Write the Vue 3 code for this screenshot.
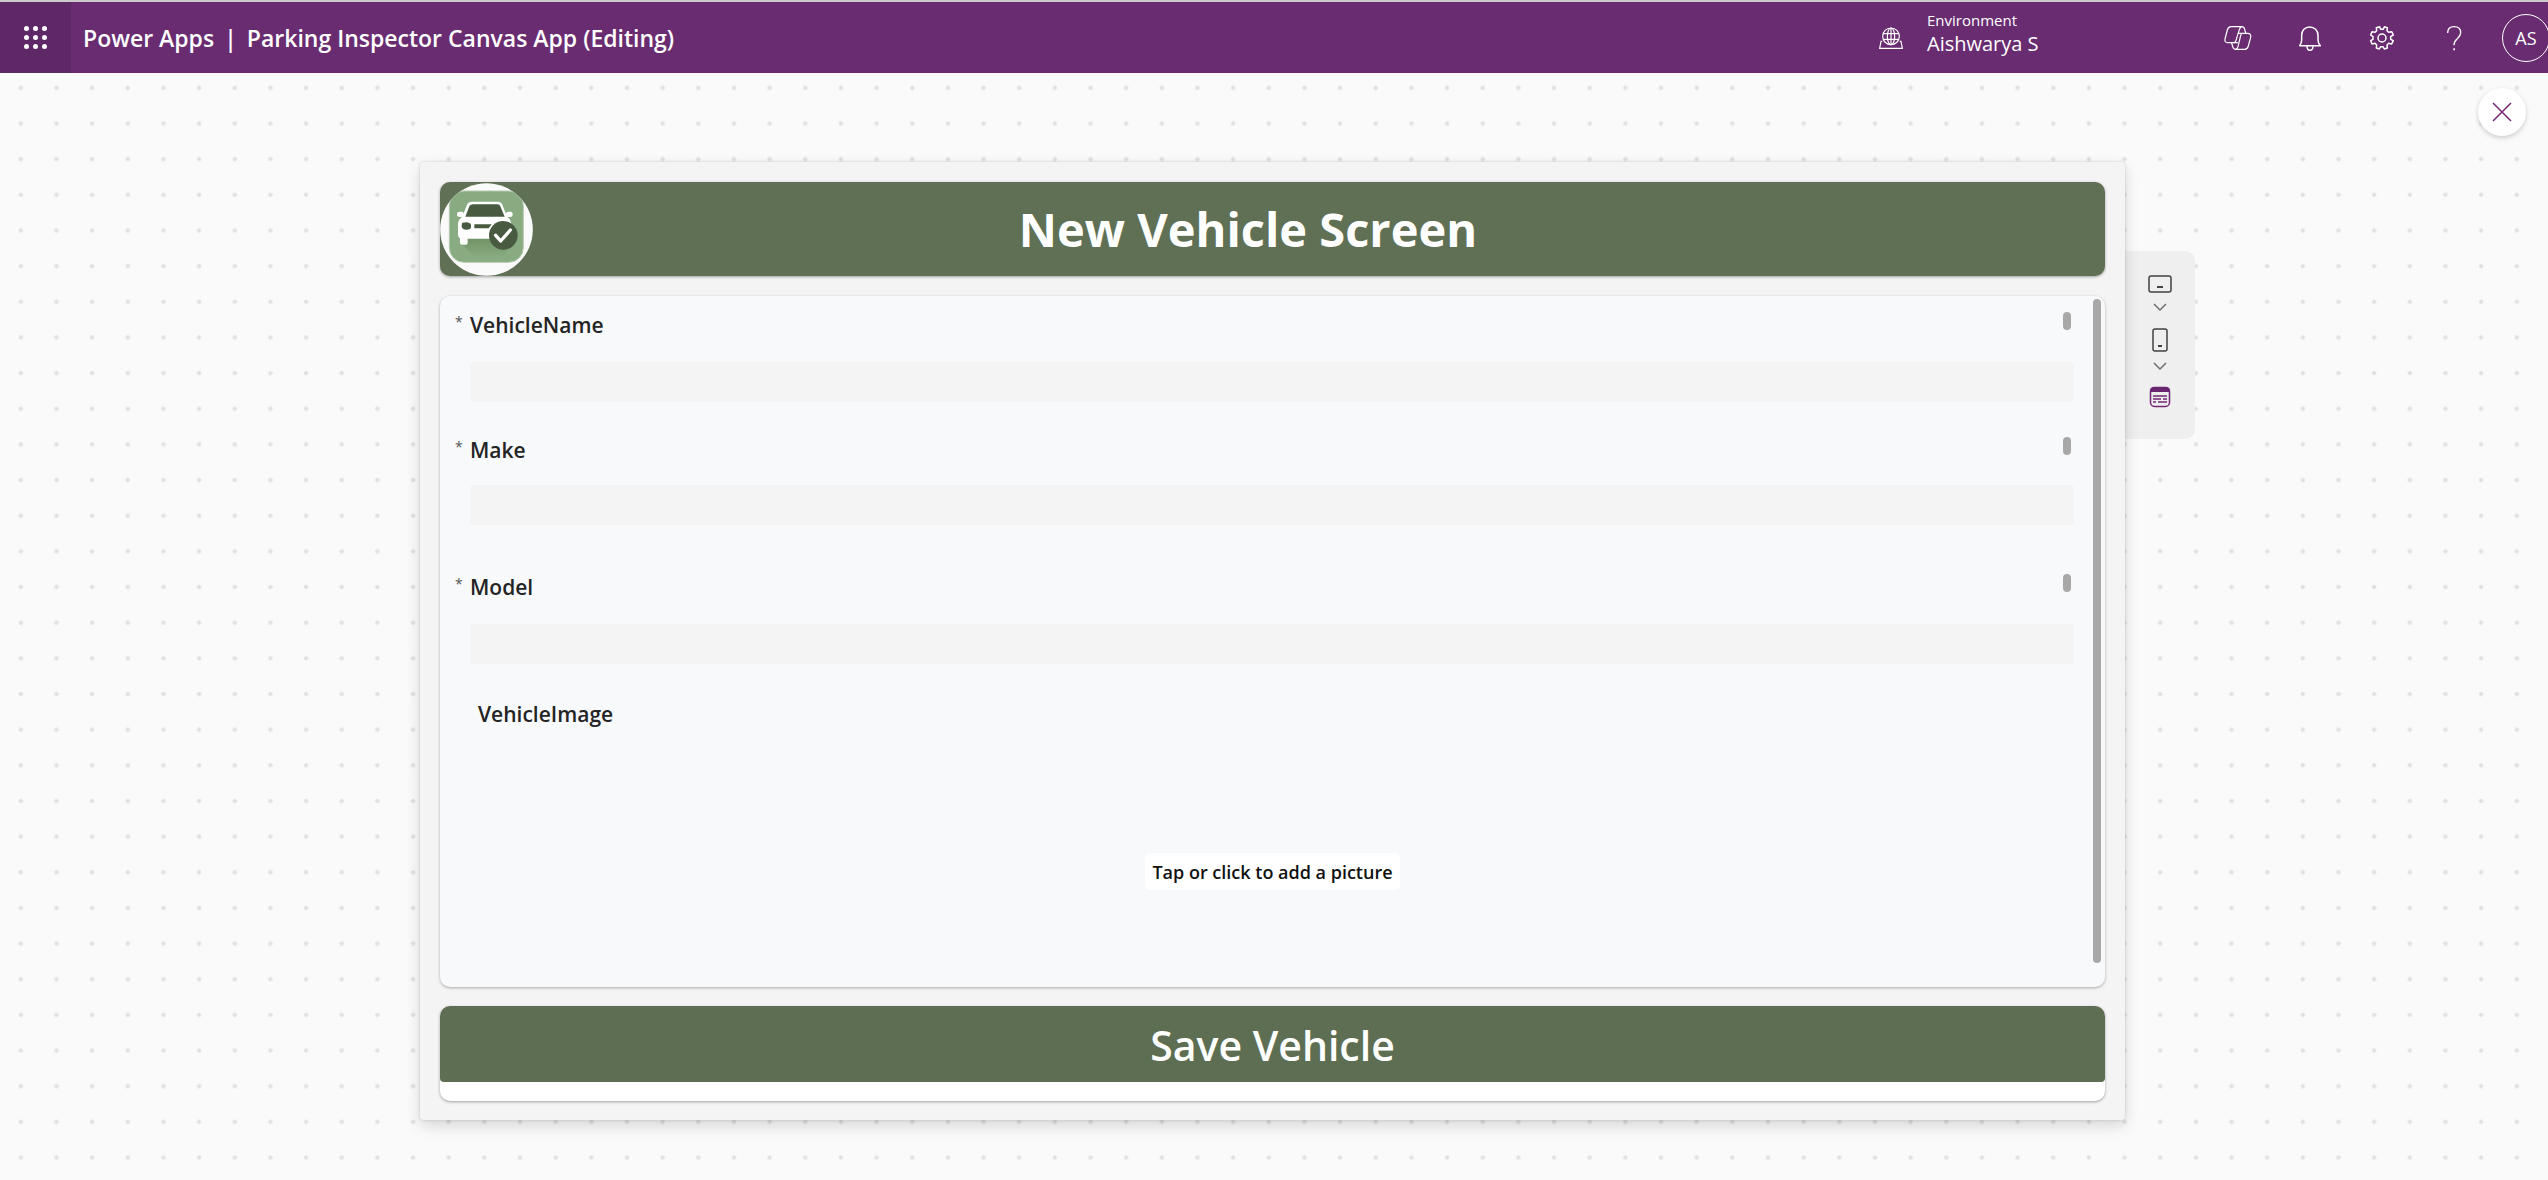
<script setup>
import { ref } from 'vue'

const fields = ref([
  { id: 'vehicle-name', label: 'VehicleName', value: '', size: 'short' },
  { id: 'make', label: 'Make', value: '', size: 'tall' },
  { id: 'model', label: 'Model', value: '', size: 'medium' },
])
const waffle = [0, 1, 2, 3, 4, 5, 6, 7, 8]
</script>

<template>
  <div class="page">
    <header class="topbar">
      <button class="launcher" type="button" aria-label="App launcher">
        <span v-for="n in waffle" :key="n" class="launcher-dot"></span>
      </button>
      <div class="titles">
        <a href="#" class="title-link">Power Apps</a>
        <span>|</span>
        <span>Parking Inspector Canvas App (Editing)</span>
      </div>

      <div class="environment">
        <svg class="env-icon" viewBox="57 78 72 72" fill="none" stroke="currentColor" stroke-width="3.5">
          <circle cx="93" cy="109" r="25" />
          <ellipse cx="93" cy="109" rx="11" ry="25" />
          <path d="M93 84v50M70 101h46M70 118h46" />
          <path d="M67 124h-4l-4 21h68l-4-21h-4" />
        </svg>
        <div class="env-text">
          <span class="env-label">Environment</span>
          <span class="env-name">Aishwarya S</span>
        </div>
      </div>

      <nav class="tools">
        <button type="button" class="tool" aria-label="Copilot">
          <svg width="30" height="28" viewBox="69 69 90 84" fill="none" stroke="currentColor" stroke-width="3.6" stroke-linejoin="round" stroke-linecap="round">
            <path d="M93 77h32q-5 2-7 9l-10 32q-2 7-8 7H83q-10 0-8-11l7-27q3-10 11-10z" />
            <path d="M126 97h17q11 0 9 12l-7 26q-3 10-11 10h-27q5-1 7-8l8-33q2-7 4-7z" />
            <path d="M125 77q7 0 9 8l3 11M107 145q-7 0-9-8l-3-11M126 97h-11M100 125h12" />
          </svg>
        </button>
        <button type="button" class="tool" aria-label="Notifications">
          <svg width="28" height="28" viewBox="291 69 84 84" fill="none" stroke="currentColor" stroke-width="4.5" stroke-linejoin="round">
            <path d="M302 134q6-8 6-17v-14c0-15 10-25 24-25s25 10 25 25v14q0 9 7 17z" />
            <path d="M324 136q0 12 9 12t9-12" />
          </svg>
        </button>
        <button type="button" class="tool" aria-label="Settings">
          <svg width="28" height="28" viewBox="509 69 84 84" fill="none" stroke="currentColor" stroke-width="4.5" stroke-linejoin="round">
            <circle cx="551" cy="111" r="12" />
            <path d="M544 77l3 8h8l3-8 9 3-1 9 5 5 9-2 5 10-8 5v8l8 4-5 10-9-2-5 5 1 9-9 3-4-7h-7l-4 7-9-3 1-9-5-5-9 2-4-10 7-4v-8l-7-5 4-10 9 2 5-5-1-9z" />
          </svg>
        </button>
        <button type="button" class="tool" aria-label="Help">
          <svg width="28" height="28" viewBox="121 69 84 84" fill="none" stroke="currentColor" stroke-width="4">
            <path d="M144 96c0-12 7-19 19-19s20 7 20 18c0 9-5 13-11 19-6 5-9 9-9 19" />
            <path d="M161 145h5" stroke-width="6" />
          </svg>
        </button>
      </nav>
      <button type="button" class="avatar" aria-label="Account">AS</button>
    </header>

    <main class="workspace">
      <section class="canvas">
        <div class="banner">
          <svg class="logo" viewBox="121 97 279 279">
            <defs>
              <clipPath id="logo-round"><circle cx="260.500" cy="236.500" r="139" /></clipPath>
              <linearGradient id="logo-shade" x1="0" y1="0" x2="0" y2="1">
                <stop offset="0" stop-color="#6f9163" />
                <stop offset="1" stop-color="#88ab82" />
              </linearGradient>
            </defs>
            <circle cx="260.500" cy="236.500" r="139" fill="#fafafa" />
            <g clip-path="url(#logo-round)">
              <rect x="149" y="121" width="222" height="214" rx="44" fill="#88ab82" stroke="#b4cbb0" stroke-width="3" />
            </g>
            <path d="M184 278l44 44h80l30-44-60-20h-80z" fill="url(#logo-shade)" />
            <path d="M217 153h78q10 0 13 9l10 26q1-5 8-5h6q7 0 7 8t-7 8h-9q12 9 12 20v45H204v12q0 6-6 6h-11q-6 0-6-6v-13q-6-3-6-11v-31q0-14 12-22h-8q-7 0-7-8t7-8h6q6 0 7 5l10-26q4-9 15-9z" fill="#fff" />
            <path d="M220 161h73q7 0 9 6l13 31H197l12-31q3-6 11-6z" fill="#485b40" />
            <path d="M188 216q22-5 26 6v7q-1 8-13 8-15 0-15-11 0-8 2-10zM224 221h52l-9 12h-43z" fill="#485b40" />
            <circle cx="311" cy="254" r="43" fill="#485b40" />
            <path d="M288 254l15 17 29-33" fill="none" stroke="#fff" stroke-width="10" stroke-linecap="round" stroke-linejoin="round" />
          </svg>
          <h1 class="banner-title">New Vehicle Screen</h1>
        </div>

        <form class="form-card" @submit.prevent>
          <div v-for="f in fields" :key="f.id" class="field" :class="f.size">
            <div class="field-head">
              <span class="required">*</span>
              <label class="field-label" :for="f.id">{{ f.label }}</label>
              <span class="pill"></span>
            </div>
            <input :id="f.id" v-model="f.value" class="field-input" type="text" />
          </div>
          <div class="image-field">
            <span id="image-label" class="field-label">VehicleImage</span>
            <button type="button" class="add-picture" aria-describedby="image-label">Tap or click to add a picture</button>
          </div>
          <div class="scroll-thumb"></div>
        </form>

        <div class="save-card">
          <button type="button" class="save">Save Vehicle</button>
        </div>
      </section>

      <aside class="side">
        <div class="rail">
          <button type="button" class="rail-button" aria-label="Tablet">
            <svg width="26" height="20" viewBox="0 0 26 20" fill="none" stroke="#424242" stroke-width="1.500">
              <rect x="2" y="2" width="22" height="16" rx="2" />
              <path d="M10 13h6" stroke-width="2" />
            </svg>
          </button>
          <button type="button" class="rail-button chevron" aria-label="Tablet sizes">
            <svg width="14" height="8" viewBox="0 0 14 8" fill="none" stroke="#707070" stroke-width="1.500"><path d="M1 1l6 6 6-6" /></svg>
          </button>
          <button type="button" class="rail-button phone" aria-label="Phone">
            <svg width="18" height="26" viewBox="0 0 18 26" fill="none" stroke="#424242" stroke-width="1.500">
              <rect x="2" y="2" width="14" height="22" rx="2" />
              <path d="M7 19h4" stroke-width="2" />
            </svg>
          </button>
          <button type="button" class="rail-button chevron" aria-label="Phone sizes">
            <svg width="14" height="8" viewBox="0 0 14 8" fill="none" stroke="#707070" stroke-width="1.500"><path d="M1 1l6 6 6-6" /></svg>
          </button>
          <button type="button" class="rail-button form" aria-label="Form layout">
            <svg width="22" height="22" viewBox="0 0 22 22" fill="none" stroke="#742774">
              <rect x="1.500" y="1.500" width="19" height="19" rx="4" stroke-width="1.500" />
              <path d="M1 6V5q0-4 4-4h12q4 0 4 4v1z" fill="#6a2770" stroke="none" />
              <path d="M4 10h14M4 13h8M14 13h4M4 16h3M9 16h9" stroke-width="1.500" />
            </svg>
          </button>
        </div>
        <button type="button" class="close" aria-label="Close preview">
          <svg width="20" height="20" viewBox="0 0 20 20" fill="none" stroke="#742774" stroke-width="1.500"><path d="M1 1l18 18M19 1L1 19" /></svg>
        </button>
      </aside>
    </main>
  </div>
</template>

<style>
body {
  margin: 0;
}
</style>

<style scoped>
.page {
  display: flex;
  flex-direction: column;
  min-height: 100vh;
  font-family: "Open Sans", "Noto Sans", sans-serif;
  color: #242424;
}
.page * {
  box-sizing: border-box;
}
button {
  margin: 0;
  padding: 0;
  border: 0;
  background: none;
  color: inherit;
  font: inherit;
  cursor: pointer;
}
svg {
  display: block;
  flex: none;
}

.topbar {
  display: flex;
  align-items: center;
  height: 73px;
  border-top: 2px solid #cbcbcb;
  background: #692c71;
  color: #fff;
  overflow: hidden;
}
.launcher {
  display: grid;
  grid-template-columns: repeat(3, 5px);
  gap: 4px;
  place-content: center;
  width: 71px;
  height: 100%;
  background: #5e2866;
}
.launcher-dot {
  width: 5px;
  height: 5px;
  border-radius: 50%;
  background: #fff;
}
.titles {
  display: flex;
  gap: 10px;
  margin-left: 12px;
  font-size: 23px;
  font-weight: 600;
  white-space: nowrap;
}
.title-link {
  color: inherit;
  text-decoration: none;
}
.environment {
  display: flex;
  align-items: center;
  gap: 24px;
  width: 323px;
  margin-left: auto;
}
.env-icon {
  width: 24px;
  height: 24px;
}
.env-text {
  display: flex;
  flex-direction: column;
  padding-bottom: 8px;
}
.env-label {
  font-size: 15px;
  line-height: 20px;
}
.env-name {
  font-size: 20px;
  line-height: 28px;
}
.tools {
  display: flex;
}
.tool {
  display: flex;
  align-items: center;
  justify-content: center;
  width: 72px;
  height: 71px;
}
.avatar {
  flex: none;
  width: 48px;
  height: 48px;
  margin-left: 12px;
  margin-right: -2px;
  border: 1px solid #fff;
  border-radius: 50%;
  font-size: 18px;
}

.workspace {
  display: grid;
  grid-template-columns: 420px minmax(0, 1fr) 423px;
  flex: 1;
  align-items: start;
  padding-bottom: 60px;
  background-color: #fafafa;
  background-image: radial-gradient(circle, #dedede 1px, transparent 3px);
  background-size: calc(107px / 3) calc(107px / 3);
  background-position: 3px -3px;
}
.canvas {
  grid-column: 2;
  display: flex;
  flex-direction: column;
  gap: 20px;
  margin-top: 89px;
  padding: 20px 20px 19px;
  border-radius: 4px;
  background: #f4f4f4;
  box-shadow: 0 6px 15px rgba(0, 0, 0, 0.14), 0 0 3px rgba(0, 0, 0, 0.16);
  z-index: 1;
}
.banner {
  display: grid;
  grid-template-columns: 93px 1fr 142px;
  align-items: center;
  height: 94px;
  border-radius: 10px;
  background: #5f7055;
  box-shadow: 0 1px 3px rgba(0, 0, 0, 0.35);
}
.logo {
  width: 93px;
  height: 93px;
}
.banner-title {
  margin: 0;
  font-size: 47px;
  font-weight: 700;
  line-height: 60px;
  color: #fff;
  text-align: center;
}

.form-card {
  position: relative;
  display: flex;
  flex-direction: column;
  padding-top: 14px;
  border-radius: 10px;
  background: #f8f9fb;
  box-shadow: 0 1px 3px rgba(0, 0, 0, 0.3);
}
.field {
  display: flex;
  flex-direction: column;
  gap: 22px;
  padding: 0 31px 0 30px;
}
.short {
  height: 125px;
}
.tall {
  height: 137px;
  gap: 20px;
}
.medium {
  height: 127px;
}
.field-head {
  display: flex;
  align-items: flex-start;
  height: 30px;
}
.required {
  width: 15px;
  margin-left: -15px;
  color: #555;
  font-size: 14px;
  line-height: 24px;
}
.field-label {
  font-size: 21px;
  font-weight: 600;
  line-height: 30px;
}
.pill {
  width: 8px;
  height: 18px;
  margin: 2px 3px 0 auto;
  border-radius: 4px;
  background: #a8a8a8;
}
.field-input {
  width: 100%;
  height: 40px;
  padding: 0 12px;
  border: 0;
  border-radius: 4px;
  background: #f4f4f4;
  font: inherit;
  font-size: 20px;
}
.image-field {
  display: flex;
  flex-direction: column;
  align-items: flex-start;
  height: 288px;
  padding: 0 38px;
}
.add-picture {
  align-self: center;
  height: 37px;
  margin-top: 124px;
  padding: 0 7px;
  border-radius: 5px;
  background: #fff;
  color: #111;
  font-size: 18px;
  font-weight: 600;
}
.scroll-thumb {
  position: absolute;
  top: 3px;
  right: 4px;
  bottom: 24px;
  width: 8px;
  border-radius: 4px;
  background: #a8a8a8;
}

.save-card {
  padding-bottom: 19px;
  border-radius: 10px;
  background: #fff;
  box-shadow: 0 1px 3px rgba(0, 0, 0, 0.35);
  margin-top: -1px;
}
.save {
  display: block;
  width: 100%;
  height: 76px;
  padding-top: 2px;
  border-radius: 10px 10px 4px 4px;
  background: #5d6e53;
  color: #fff;
  font-size: 41px;
  font-weight: 600;
}

.side {
  grid-column: 3;
  display: flex;
  align-items: flex-start;
  justify-content: space-between;
  padding-right: 22px;
}
.rail {
  display: flex;
  flex-direction: column;
  align-items: center;
  width: 70px;
  height: 188px;
  margin-top: 178px;
  padding-top: 23px;
  border-radius: 0 10px 10px 0;
  background: #efefef;
}
.chevron {
  margin-top: 9px;
}
.phone {
  margin-top: 16px;
}
.form {
  margin-top: 16px;
}
.close {
  display: flex;
  align-items: center;
  justify-content: center;
  width: 48px;
  height: 48px;
  margin-top: 15px;
  border-radius: 50%;
  background: #fff;
  box-shadow: 0 2px 5px rgba(0, 0, 0, 0.18);
}
</style>
